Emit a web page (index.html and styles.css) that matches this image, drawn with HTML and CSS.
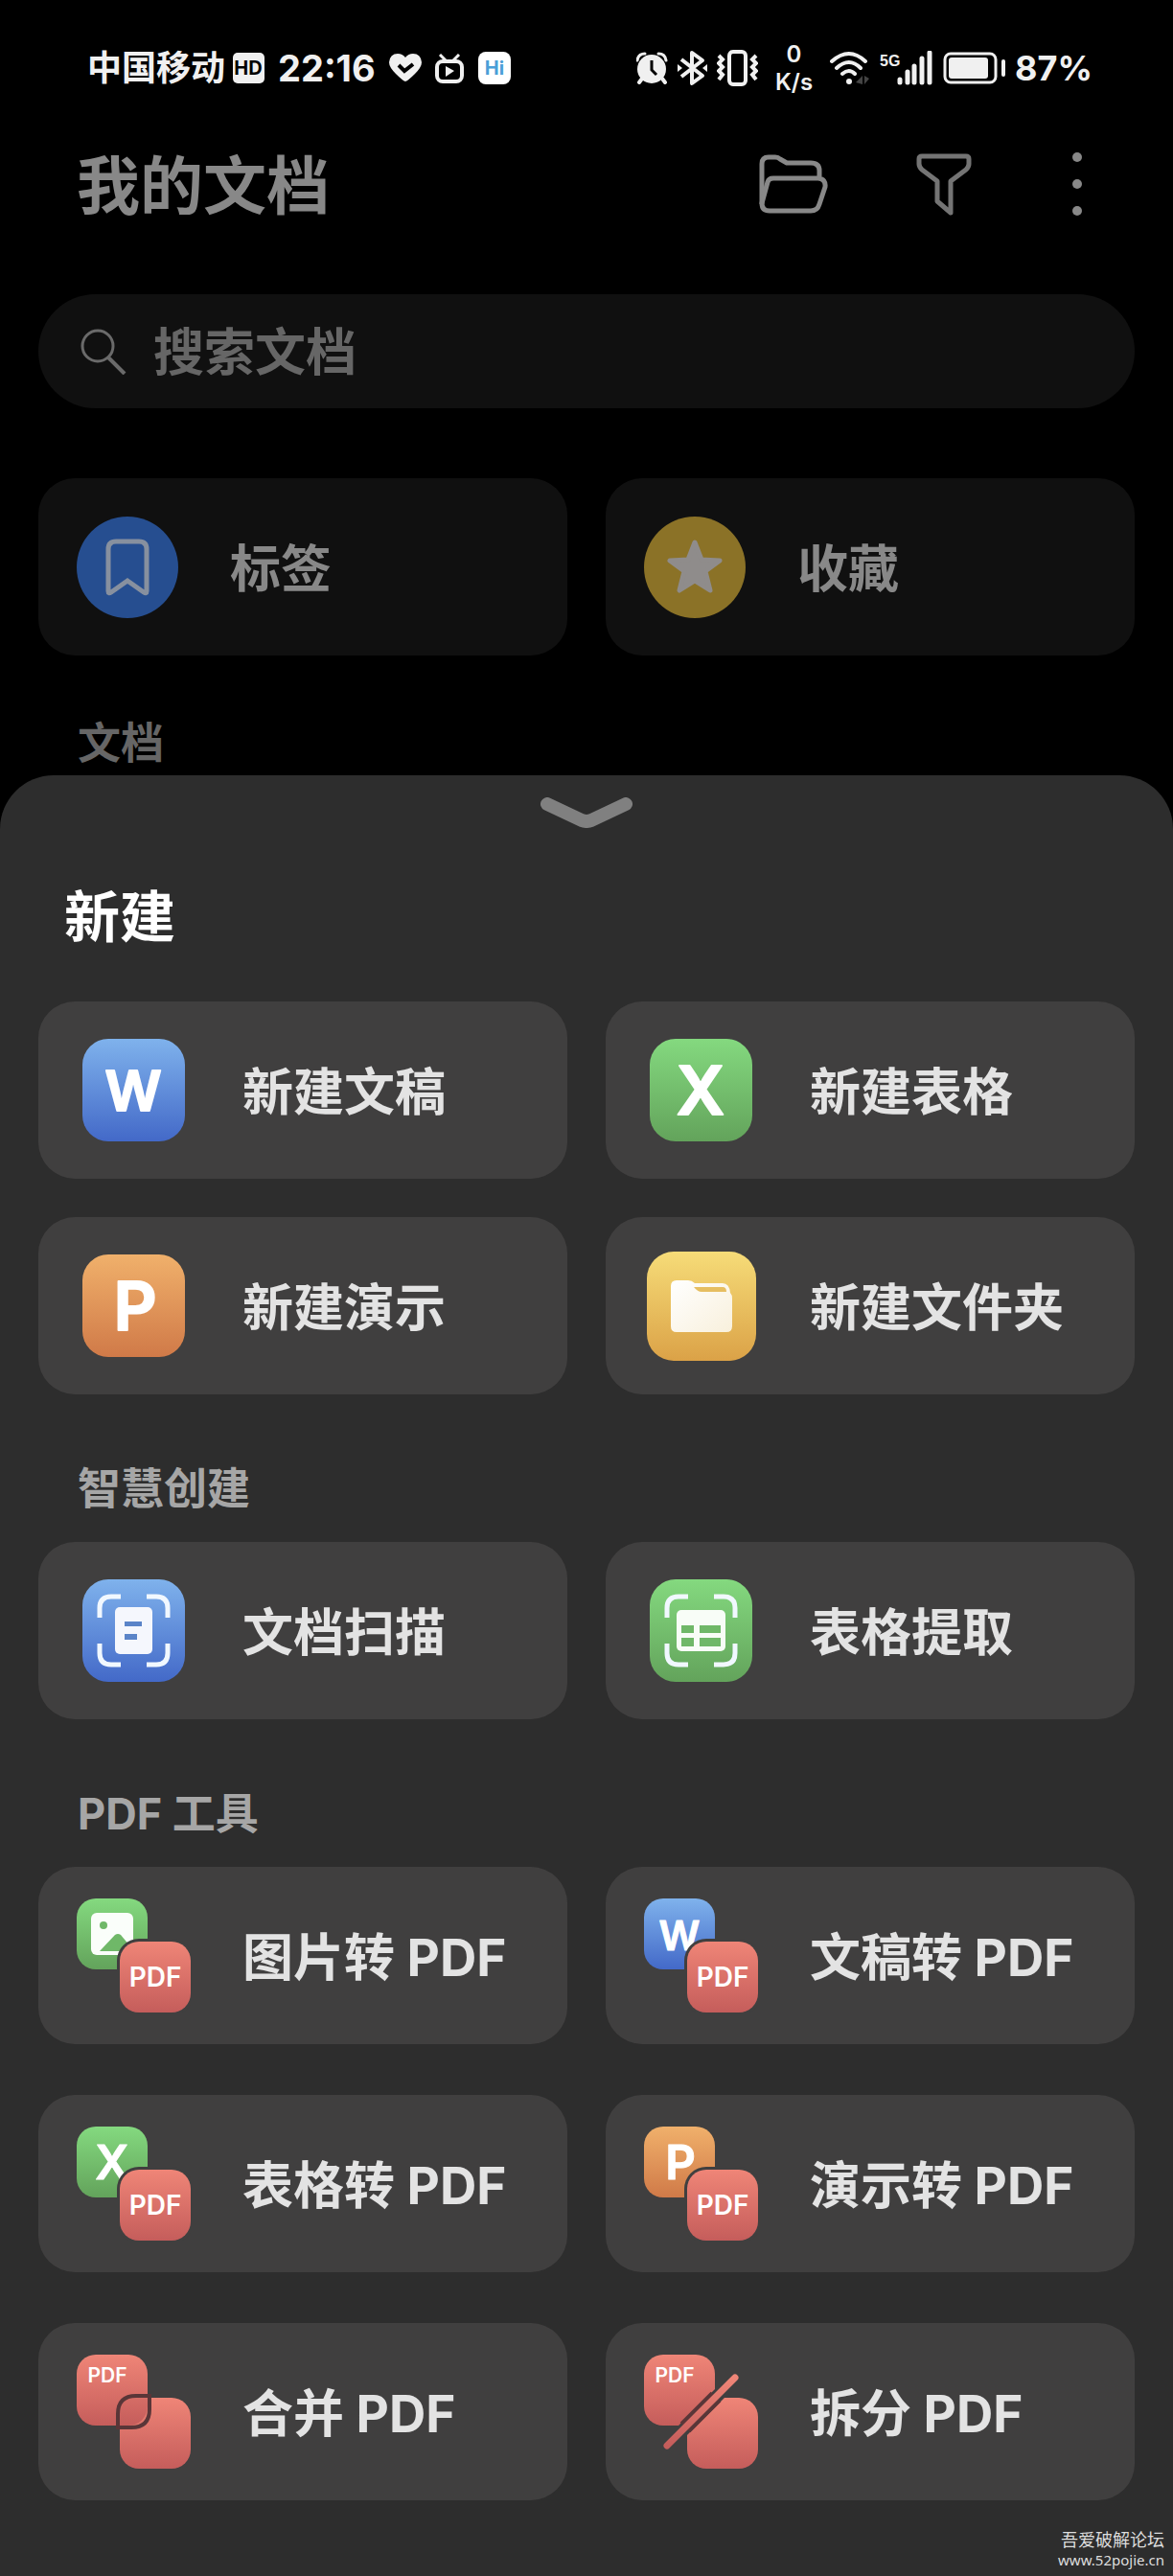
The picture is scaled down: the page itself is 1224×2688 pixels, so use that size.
FILE: index.html
```html
<!DOCTYPE html>
<html lang="zh-CN">
<head>
    <meta charset="UTF-8">
    <meta name="viewport" content="width=device-width, initial-scale=1.0">
    <title>我的文档</title>
    <link rel="stylesheet" href="styles.css">
</head>
<body>
    <!-- Shared gradients and tiles -->
    <svg class="defs" width="0" height="0" aria-hidden="true">
        <defs>
            <linearGradient id="blue" x1="0" y1="0" x2="0" y2="1"><stop offset="0" stop-color="#7fb2ec"/><stop offset="1" stop-color="#4369c8"/></linearGradient>
            <linearGradient id="green" x1="0" y1="0" x2="0" y2="1"><stop offset="0" stop-color="#84d97f"/><stop offset="1" stop-color="#63a35b"/></linearGradient>
            <linearGradient id="orange" x1="0" y1="0" x2="0" y2="1"><stop offset="0" stop-color="#f0b06b"/><stop offset="1" stop-color="#d07a48"/></linearGradient>
            <linearGradient id="yellow" x1="0" y1="0" x2="0" y2="1"><stop offset="0" stop-color="#f6dc78"/><stop offset="1" stop-color="#dba247"/></linearGradient>
            <linearGradient id="red" x1="0" y1="0" x2="0" y2="1"><stop offset="0" stop-color="#ef8577"/><stop offset="1" stop-color="#c55d5b"/></linearGradient>
            <linearGradient id="paper" x1="0" y1="0" x2="1" y2="1"><stop offset="0" stop-color="#ffffff"/><stop offset="1" stop-color="#f8f0dc"/></linearGradient>
            <clipPath id="upper"><path d="M0 0H110L0 110Z"/></clipPath>
            <clipPath id="lower"><path d="M119 119V10L10 119Z"/></clipPath>
            <symbol id="brackets" viewBox="0 0 107 107">
                <path d="M18 40V30Q18 18 30 18H40M67 18H77Q89 18 89 30V40M89 67V77Q89 89 77 89H67M40 89H30Q18 89 18 77V67" fill="none" stroke="#f1f8ff" stroke-width="5"/>
            </symbol>
            <symbol id="pdf-front" viewBox="0 0 119 119">
                <rect x="42" y="42" width="80" height="80" rx="23" fill="#403f3f"/>
                <rect x="45" y="45" width="74" height="74" rx="20" fill="url(#red)"/>
                <text class="pdf-mark" x="82" y="92">PDF</text>
            </symbol>
        </defs>
    </svg>

    <div class="status-bar">
        <div class="status-group">
            <span class="carrier">中国移动
                <svg width="33" height="32" viewBox="0 0 33 32"><rect width="33" height="32" rx="5" fill="#f0f0f0"/><text class="hd-mark" x="16" y="23">HD</text></svg>
            </span>
            <span class="clock">22:16</span>
            <svg width="34" height="30" viewBox="0 0 34 30"><path d="M17 29Q14 28 7 21Q0 14 0 9Q1 0 9 0Q14 0 17 4Q20 0 25 0Q33 0 34 9Q34 14 27 21Q20 28 17 29Z" fill="#f0f0f0"/><path d="M10 12L16 18L25 11" fill="none" stroke="#000" stroke-width="4"/></svg>
            <svg width="31" height="31" viewBox="0 0 31 31" fill="none" stroke="#f0f0f0" stroke-width="4"><rect x="2" y="8" width="26" height="21" rx="6"/><path d="M5 1L11 7M25 1L19 7" stroke-width="3"/><path d="M11 13V24L20 18Z" fill="#f0f0f0" stroke="none"/></svg>
            <svg width="34" height="34" viewBox="0 0 34 34"><rect width="34" height="34" rx="8" fill="#fff"/><text class="hi-mark" x="17" y="24">Hi</text></svg>
        </div>
        <div class="status-group status-right">
            <svg width="33" height="34" viewBox="0 0 33 34"><path d="M6 28L3 32M27 28L30 32" stroke="#f0f0f0" stroke-width="4" stroke-linecap="round"/><circle cx="16" cy="18" r="15" fill="#f0f0f0"/><path d="M1 9Q2 2 9 2M31 9Q30 2 23 2" fill="none" stroke="#f0f0f0" stroke-width="3" stroke-linecap="round"/><path d="M16 9V19L21 24" fill="none" stroke="#000" stroke-width="3"/></svg>
            <svg width="31" height="38" viewBox="0 0 31 38" fill="none" stroke="#f0f0f0" stroke-width="4" stroke-linejoin="round"><path d="M4 10L26 27L15 35V3L26 11L4 28"/><path d="M0 15L5 19L0 23ZM31 15L26 19L31 23Z" fill="#f0f0f0" stroke="none"/></svg>
            <svg width="43" height="38" viewBox="0 0 43 38" fill="none" stroke="#f0f0f0" stroke-width="4"><rect x="13" y="2" width="17" height="34" rx="4"/><path d="M2 6L6 10L2 14L6 18L2 22L6 26L2 31M41 6L37 10L41 14L37 18L41 22L37 26L41 31"/></svg>
            <span class="speed"><span>0</span><span>K/s</span></span>
            <svg width="42" height="36" viewBox="0 0 42 36" fill="none" stroke="#f0f0f0" stroke-width="4" stroke-linecap="round"><path d="M2 11Q20 -5 37 11M7 18Q20 6 32 18M13 24Q20 18 26 24"/><circle cx="20" cy="32" r="3" fill="#f0f0f0" stroke="none"/><path d="M34 26V35L27 33ZM36 35V26L41 29Z" fill="#444" stroke="none"/></svg>
            <svg width="56" height="36" viewBox="0 0 56 36"><text class="net-mark" x="0" y="16">5G</text><path d="M21 30V33M29 22V33M36 16V33M44 8V33M52 2V33" stroke="#f0f0f0" stroke-width="5" stroke-linecap="round"/></svg>
            <svg width="65" height="34" viewBox="0 0 65 34"><rect x="2" y="2" width="53" height="30" rx="6" fill="none" stroke="#f0f0f0" stroke-width="3"/><rect x="6" y="6" width="41" height="22" rx="3" fill="#f0f0f0"/><rect x="61" y="8" width="4" height="18" rx="2" fill="#f0f0f0"/></svg>
            <span class="battery-text">87%</span>
        </div>
    </div>

    <main class="documents">
        <header class="header">
            <h1>我的文档</h1>
            <div class="header-actions">
                <button type="button" aria-label="打开文件夹">
                    <svg width="72" height="62" viewBox="0 0 72 62" fill="none" stroke="#888" stroke-width="5" stroke-linejoin="round"><path d="M3 52V10Q3 3 10 3H17Q20 3 22 5L29 9H54Q63 9 63 17V23"/><path d="M3 51L9 29Q10 25 15 25H62Q70 26 69 34L63 52Q61 59 54 59H11Q3 59 3 51Z"/></svg>
                </button>
                <button type="button" aria-label="筛选">
                    <svg width="58" height="65" viewBox="0 0 58 65" fill="none" stroke="#747474" stroke-width="5" stroke-linejoin="round"><path d="M6 3H52Q55 3 55 6V11Q55 14 52 17L36 29V62L22 50V29L6 17Q3 14 3 11V6Q3 3 6 3Z"/></svg>
                </button>
                <button type="button" aria-label="更多">
                    <svg width="10" height="67" viewBox="0 0 10 67" fill="#888"><circle cx="5" cy="5" r="5"/><circle cx="5" cy="33" r="5"/><circle cx="5" cy="61" r="5"/></svg>
                </button>
            </div>
        </header>

        <label class="search">
            <svg width="48" height="48" viewBox="0 0 48 48" fill="none" stroke="#6a6a6a" stroke-width="3"><circle cx="18" cy="18" r="16"/><path d="M29 30L46 47" stroke-width="4"/></svg>
            <input type="search" placeholder="搜索文档" aria-label="搜索文档">
        </label>

        <div class="card-grid">
            <button type="button" class="card">
                <svg width="106" height="106" viewBox="0 0 106 106"><circle cx="53" cy="53" r="53" fill="#264e90"/><path d="M33 78V34Q33 26 41 26H65Q73 26 73 34V78Q73 81 70 79L53 67L36 79Q33 81 33 78Z" fill="none" stroke="#87909f" stroke-width="5"/></svg>
                <span class="card-label">标签</span>
            </button>
            <button type="button" class="card">
                <svg width="106" height="106" viewBox="0 0 106 106"><circle cx="53" cy="53" r="53" fill="#8b7227"/><path d="M53 27L60 45L79 46L64 57L69 77L53 67L37 77L42 57L27 46L46 45Z" fill="#8f8c8b" stroke="#8f8c8b" stroke-width="5" stroke-linejoin="round"/></svg>
                <span class="card-label">收藏</span>
            </button>
        </div>

        <h2 class="section-title">文档</h2>
    </main>

    <section class="sheet">
        <button type="button" class="handle" aria-label="收起">
            <svg width="96" height="32" viewBox="0 0 96 32" fill="none" stroke="#808080" stroke-width="14" stroke-linecap="round" stroke-linejoin="round"><path d="M7 7L43 24Q48 26 53 24L89 7"/></svg>
        </button>
        <h2 class="sheet-title">新建</h2>
        <div class="card-grid">
            <button type="button" class="card">
                <span class="icon"><svg width="107" height="107" viewBox="0 0 107 107"><rect width="107" height="107" rx="27" fill="url(#blue)"/><text class="letter letter-w" x="53" y="75">W</text></svg></span>
                <span class="card-label">新建文稿</span>
            </button>
            <button type="button" class="card">
                <span class="icon"><svg width="107" height="107" viewBox="0 0 107 107"><rect width="107" height="107" rx="27" fill="url(#green)"/><text class="letter" x="53" y="79">X</text></svg></span>
                <span class="card-label">新建表格</span>
            </button>
            <button type="button" class="card">
                <span class="icon"><svg width="107" height="107" viewBox="0 0 107 107"><rect width="107" height="107" rx="27" fill="url(#orange)"/><text class="letter" x="55" y="79">P</text></svg></span>
                <span class="card-label">新建演示</span>
            </button>
            <button type="button" class="card">
                <span class="icon"><svg width="114" height="114" viewBox="0 0 114 114"><rect width="114" height="114" rx="28" fill="url(#yellow)"/><path d="M25 36Q25 30 31 30H43Q47 30 50 33H79Q86 33 87 43Q89 45 89 49V78Q89 84 83 84H31Q25 84 25 78Z" fill="url(#paper)"/><path d="M49 37H79Q83 37 83 42H57Q53 42 49 37Z" fill="#e6be61"/></svg></span>
                <span class="card-label">新建文件夹</span>
            </button>
        </div>

        <h3 class="section-title">智慧创建</h3>
        <div class="card-grid">
            <button type="button" class="card">
                <span class="icon"><svg width="107" height="107" viewBox="0 0 107 107"><rect width="107" height="107" rx="27" fill="url(#blue)"/><use href="#brackets"/><rect x="34" y="29" width="39" height="49" rx="5" fill="#f5f7fd"/><path d="M44 44H62V49H44ZM44 57H57V63H44Z" fill="#5b84c8"/></svg></span>
                <span class="card-label">文档扫描</span>
            </button>
            <button type="button" class="card">
                <span class="icon"><svg width="107" height="107" viewBox="0 0 107 107"><rect width="107" height="107" rx="27" fill="url(#green)"/><use href="#brackets"/><rect x="28" y="32" width="51" height="43" rx="5" fill="#f8fdf7"/><path d="M33 48H46V56H33ZM52 48H74V56H52ZM33 61H46V70H33ZM52 61H74V70H52Z" fill="#6fb868"/></svg></span>
                <span class="card-label">表格提取</span>
            </button>
        </div>

        <h3 class="section-title">PDF 工具</h3>
        <div class="card-grid tools">
            <button type="button" class="card">
                <span class="icon"><svg width="119" height="119" viewBox="0 0 119 119"><rect width="74" height="74" rx="20" fill="url(#green)"/><rect x="15" y="15" width="44" height="44" rx="6" fill="#fafefa"/><circle cx="28" cy="28" r="4" fill="#6fb868"/><path d="M24 55L40 38Q43 36 46 38L60 55Z" fill="#6fb868"/><use href="#pdf-front"/></svg></span>
                <span class="card-label">图片转 PDF</span>
            </button>
            <button type="button" class="card">
                <span class="icon"><svg width="119" height="119" viewBox="0 0 119 119"><rect width="74" height="74" rx="20" fill="url(#blue)"/><text class="letter-small letter-small-w" x="37" y="54">W</text><use href="#pdf-front"/></svg></span>
                <span class="card-label">文稿转 PDF</span>
            </button>
            <button type="button" class="card">
                <span class="icon"><svg width="119" height="119" viewBox="0 0 119 119"><rect width="74" height="74" rx="20" fill="url(#green)"/><text class="letter-small" x="37" y="55">X</text><use href="#pdf-front"/></svg></span>
                <span class="card-label">表格转 PDF</span>
            </button>
            <button type="button" class="card">
                <span class="icon"><svg width="119" height="119" viewBox="0 0 119 119"><rect width="74" height="74" rx="20" fill="url(#orange)"/><text class="letter-small" x="38" y="55">P</text><use href="#pdf-front"/></svg></span>
                <span class="card-label">演示转 PDF</span>
            </button>
            <button type="button" class="card">
                <span class="icon"><svg width="119" height="119" viewBox="0 0 119 119"><rect x="45" y="45" width="74" height="74" rx="20" fill="url(#red)"/><rect width="74" height="74" rx="20" fill="url(#red)"/><path d="M43 76V62Q43 43 62 43H76V57Q76 76 57 76Z" fill="none" stroke="#593638" stroke-width="4"/><text class="pdf-mark pdf-mark-small" x="32" y="29">PDF</text></svg></span>
                <span class="card-label">合并 PDF</span>
            </button>
            <button type="button" class="card">
                <span class="icon"><svg width="119" height="119" viewBox="0 0 119 119"><g clip-path="url(#upper)"><rect width="74" height="74" rx="20" fill="url(#red)"/></g><g clip-path="url(#lower)"><rect x="45" y="45" width="74" height="74" rx="20" fill="url(#red)"/></g><path d="M75 44L43 76" stroke="#593638" stroke-width="15"/><path d="M95 24L24 95" stroke="url(#red)" stroke-width="7" stroke-linecap="round"/><text class="pdf-mark pdf-mark-small" x="32" y="29">PDF</text></svg></span>
                <span class="card-label">拆分 PDF</span>
            </button>
        </div>

        <p class="watermark">吾爱破解论坛<br><span>www.52pojie.cn</span></p>
    </section>
</body>
</html>
```
FILE: styles.css
```css
* {
    box-sizing: border-box;
}

body {
    display: flex;
    flex-direction: column;
    min-height: 100vh;
    margin: 0;
    background-color: #000;
    color: #888;
    font-family: Inter, "Noto Sans CJK SC", sans-serif;
    font-weight: bold;
}

h1, h2, h3, p {
    margin: 0;
}

svg {
    display: block;
    flex-shrink: 0;
}

button {
    padding: 0;
    border: none;
    background: none;
    color: inherit;
    font: inherit;
    cursor: pointer;
}

.defs {
    position: absolute;
}

/* Status bar */
.status-bar {
    display: flex;
    justify-content: space-between;
    height: 98px;
    padding: 44px 84px 0 91px;
    color: #f0f0f0;
    font-size: 36px;
    line-height: 54px;
}

.status-group,
.carrier {
    display: flex;
    align-items: center;
    gap: 14px;
}

.carrier {
    gap: 8px;
}

.status-right {
    gap: 10px;
}

.clock {
    font-size: 38px;
}

.speed {
    display: flex;
    flex-direction: column;
    align-items: center;
    margin: 0 8px;
    font-size: 24px;
    font-weight: 600;
    line-height: 29px;
}

.hd-mark,
.hi-mark {
    font-size: 20px;
    text-anchor: middle;
}

.hi-mark {
    fill: #4a9fd8;
}

.net-mark {
    font-family: "Liberation Sans", sans-serif;
    font-size: 16px;
    fill: #f0f0f0;
}

/* Documents page */
.documents {
    padding: 0 40px;
}

.header {
    display: flex;
    align-items: center;
    justify-content: space-between;
    height: 188px;
    padding: 0 55px 0 40px;
}

.header h1 {
    padding-top: 3px;
    font-size: 66px;
    line-height: 80px;
}

.header-actions {
    display: flex;
    align-items: center;
    gap: 92px;
}

.header-actions button:last-child {
    margin-left: 13px;
}

.search {
    display: flex;
    align-items: center;
    gap: 28px;
    height: 119px;
    margin: 21px 0 73px;
    padding: 0 44px;
    border-radius: 60px;
    background-color: #101010;
}

.search input {
    flex: 1;
    min-width: 0;
    padding: 3px 0 0;
    border: none;
    outline: none;
    background: none;
    color: #888;
    font: inherit;
    font-size: 53px;
}

.search input::placeholder {
    color: #666;
    opacity: 1;
}

.section-title {
    padding-left: 41px;
    font-size: 45px;
    line-height: 66px;
}

.documents .section-title {
    margin-top: 59px;
    color: #666;
}

/* Cards */
.card-grid {
    display: grid;
    grid-template-columns: 1fr 1fr;
    gap: 40px;
}

.tools {
    row-gap: 53px;
}

.card {
    display: flex;
    align-items: center;
    gap: 54px;
    height: 185px;
    padding: 0 40px;
    border-radius: 38px;
    background-color: #101010;
    font-size: 53px;
    line-height: 80px;
    text-align: left;
    white-space: nowrap;
}

.card-label {
    padding-top: 4px;
}

.icon {
    display: flex;
    justify-content: center;
    width: 119px;
}

/* Bottom sheet */
.sheet {
    position: relative;
    flex: 1;
    padding: 0 40px 79px;
    border-radius: 56px 56px 0 0;
    background-color: #2d2d2d;
}

.handle {
    display: block;
    margin: 0 auto;
    padding-top: 23px;
}

.sheet-title {
    margin: 52px 0 47px;
    padding-left: 27px;
    color: #fff;
    font-size: 58px;
    line-height: 82px;
}

.sheet .section-title {
    margin: 66px 0 22px;
    color: #a6a6a6;
}

.sheet .card {
    background-color: #403f3f;
    color: #e3e3e3;
}

/* Icon lettering */
.letter,
.letter-small,
.pdf-mark {
    fill: #fff;
    font-weight: 600;
    text-anchor: middle;
}

.letter,
.letter-small {
    stroke: #fff;
    stroke-width: 2px;
    stroke-linejoin: round;
}

.letter {
    font-size: 70px;
}

.letter-w {
    font-size: 58px;
}

.letter-small {
    font-size: 49px;
    stroke-width: 1px;
}

.letter-small-w {
    font-size: 42px;
}

.pdf-mark {
    font-size: 28px;
}

.pdf-mark-small {
    font-size: 21px;
}

.watermark {
    position: absolute;
    right: 9px;
    bottom: 7px;
    color: #ddd;
    font-family: "Noto Sans CJK SC", sans-serif;
    font-size: 18px;
    font-weight: normal;
    line-height: 20px;
    text-align: right;
}

.watermark span {
    font-family: "Noto Sans", sans-serif;
    font-size: 15px;
}
```
